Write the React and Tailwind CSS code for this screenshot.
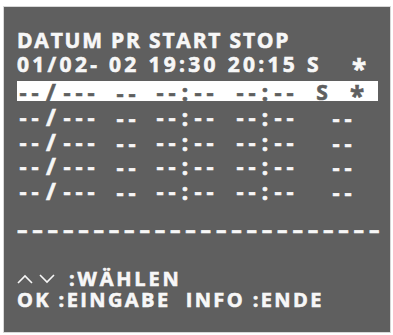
import React from 'react'

const Cell = ({ w, children }) => (
  <span className={`inline-block text-center ${w}`}>{children}</span>
)

const Dash = () => <Cell w="w-[12px]">-</Cell>

const Date = () => (
  <span className="flex">
    <Dash />
    <Dash />
    <Cell w="w-[20px] text-[24px]">/</Cell>
    <Dash />
    <Dash />
    <Dash />
  </span>
)

const Time = ({ className }) => (
  <span className={`flex ${className}`}>
    <Dash />
    <Dash />
    <Cell w="w-[14px] text-[24px]">:</Cell>
    <Dash />
    <Dash />
  </span>
)

const Pair = ({ className }) => (
  <span className={`flex ${className}`}>
    <Dash />
    <Dash />
  </span>
)

const EmptyRow = () => (
  <div className="flex items-center h-[24.5px] ml-[13px] leading-none pt-[4px]">
    <Date />
    <Pair className="ml-[17px]" />
    <Time className="ml-[16px]" />
    <Time className="ml-[18px]" />
    <Pair className="ml-[34px]" />
  </div>
)

export default function App() {
  return (
    <div className="w-[393px] h-[335px] bg-white pt-[7px] pl-[4px] font-['Open_Sans',sans-serif] font-bold text-[#f7f7f7] [-webkit-text-stroke:0.6px_currentColor]">
      <div className="w-[386px] h-[325px] bg-[#5f5f5f] pt-[21px] shadow-[0_0_0_1px_#d8d8d8]">
        {/* header */}
        <div className="h-[24px] leading-[24px] pl-[13px] text-[21px] tracking-[1.8px]">
          DATUM PR START STOP
        </div>
        <div className="flex h-[25px] leading-[25px] pl-[13px] text-[21px]">
          <span className="w-[335px] tracking-[3.3px]">01/02- 02 19:30 20:15 S</span>
          <span className="w-[14px] text-center text-[26px] translate-y-[5px]">*</span>
        </div>

        {/* selected row */}
        <div className="mt-[4px] ml-[13px] w-[361px] h-[20px] bg-white text-[#5f5f5f] flex items-center leading-none text-[22px] pt-[2px]">
          <Date />
          <Pair className="ml-[17px]" />
          <Time className="ml-[16px]" />
          <Time className="ml-[18px]" />
          <Cell w="w-[12px] ml-[20px] text-[21px]">S</Cell>
          <Cell w="w-[14px] ml-[22px] translate-y-[4px] text-[26px]">*</Cell>
        </div>

        {/* empty rows */}
        <div className="mt-[2px] text-[22px]">
          <EmptyRow />
          <EmptyRow />
          <EmptyRow />
          <EmptyRow />
        </div>

        {/* separator */}
        <div className="mt-[19px] h-[20px] ml-[13px] flex items-center text-[21px] leading-none tracking-[4.8px] whitespace-nowrap overflow-hidden w-[372px]">
          ––––––––––––––––––––––––
        </div>

        {/* footer */}
        <div className="mt-[28px] h-[21px] pl-[13px] flex items-center text-[20px] tracking-[2.4px] leading-none">
          <svg width="16" height="10" viewBox="0 0 16 10" className="mr-[6px]">
            <polyline points="1,9 8,2 15,9" fill="none" stroke="#f7f7f7" strokeWidth="1.6" />
          </svg>
          <svg width="16" height="10" viewBox="0 0 16 10" className="mr-[14px]">
            <polyline points="1,1 8,8 15,1" fill="none" stroke="#f7f7f7" strokeWidth="1.6" />
          </svg>
          <span className="tracking-[2.8px]">:WÄHLEN</span>
        </div>
        <div className="h-[21px] pl-[13px] flex items-center text-[20px] tracking-[2.4px] leading-none whitespace-pre">
          OK :EINGABE  INFO :ENDE
        </div>
      </div>
    </div>
  )
}
